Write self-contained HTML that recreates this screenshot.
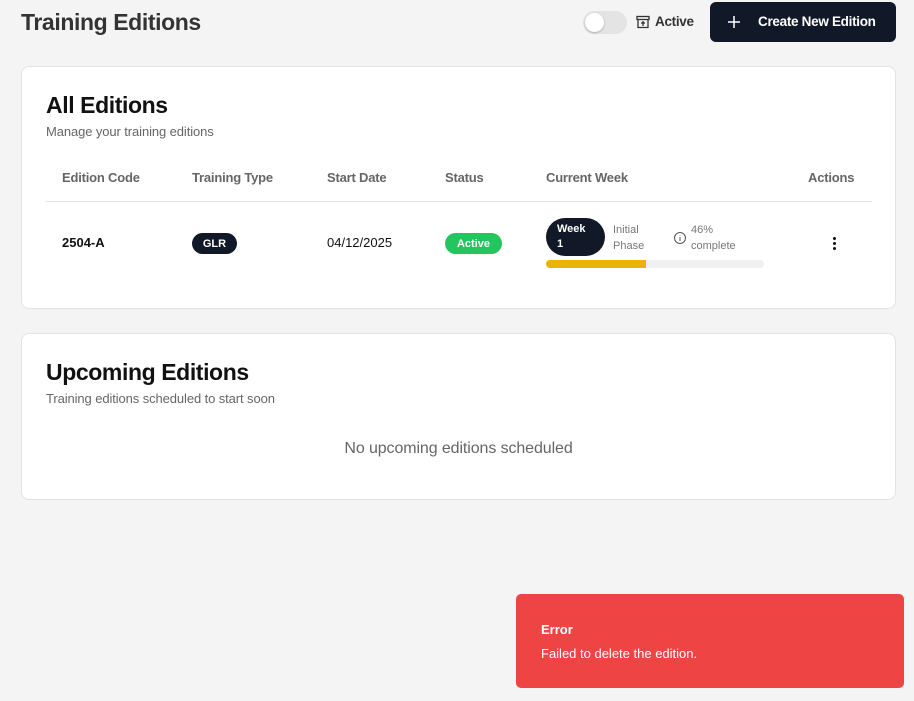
<!DOCTYPE html>
<html><head><style>
*{box-sizing:border-box;margin:0;padding:0}
body{width:914px;height:701px;background:#f4f4f4;font-family:"Liberation Sans",sans-serif;position:relative;overflow:hidden;color:#111}
.abs{position:absolute}
.card{position:absolute;left:21px;width:875px;background:#fff;border:1px solid #e3e3e3;border-radius:8px}
.th{font-size:13px;font-weight:bold;color:#666;letter-spacing:-0.2px}
</style></head><body>
<div class="abs" style="left:21px;top:9px;font-size:23px;font-weight:bold;color:#333;letter-spacing:-0.4px">Training Editions</div>
<div class="abs" style="left:583px;top:11px;width:44px;height:23px;border-radius:12px;background:#e4e4e4"><div style="position:absolute;left:2px;top:2px;width:19px;height:19px;border-radius:50%;background:#fff;box-shadow:0 1px 2px rgba(0,0,0,.25)"></div></div>
<svg class="abs" style="left:636px;top:15px" width="14" height="14" viewBox="0 0 14 14" fill="none" stroke="#333" stroke-width="1.3"><rect x="1" y="1.5" width="12" height="3"/><path d="M2 4.5v8h10v-8M7 11V7M5.3 8.5L7 6.8l1.7 1.7"/></svg>
<div class="abs" style="left:655px;top:14px;font-size:13.5px;font-weight:bold;color:#333;letter-spacing:-0.3px">Active</div>
<div class="abs" style="left:710px;top:2px;width:186px;height:40px;background:#111827;border-radius:6px;color:#fff;font-size:13.5px;font-weight:bold;line-height:40px;letter-spacing:-0.3px"><svg style="position:absolute;left:18px;top:14px" width="12" height="12" viewBox="0 0 12 12" stroke="#fff" stroke-width="1.5"><path d="M6 0v12M0 6h12"/></svg><span style="position:absolute;left:48px">Create New Edition</span></div>

<div class="card" style="top:66px;height:243px">
<div class="abs" style="left:24px;top:25px;font-size:23px;font-weight:bold;letter-spacing:-0.4px">All Editions</div>
<div class="abs" style="left:24px;top:57px;font-size:13px;color:#666;letter-spacing:-0.1px">Manage your training editions</div>
<div class="abs th" style="left:40px;top:103px">Edition Code</div>
<div class="abs th" style="left:170px;top:103px">Training Type</div>
<div class="abs th" style="left:305px;top:103px">Start Date</div>
<div class="abs th" style="left:423px;top:103px">Status</div>
<div class="abs th" style="left:524px;top:103px">Current Week</div>
<div class="abs th" style="left:786px;top:103px">Actions</div>
<div class="abs" style="left:24px;top:134px;width:826px;height:1px;background:#e5e5e5"></div>
<div class="abs" style="left:40px;top:168px;font-size:13px;font-weight:bold">2504-A</div>
<div class="abs" style="left:170px;top:166px;width:45px;height:21px;border-radius:11px;background:#111827;color:#fff;font-size:11px;font-weight:bold;text-align:center;line-height:22px">GLR</div>
<div class="abs" style="left:305px;top:168px;font-size:13px">04/12/2025</div>
<div class="abs" style="left:423px;top:166px;width:57px;height:21px;border-radius:11px;background:#22c55e;color:#fff;font-size:11px;font-weight:bold;text-align:center;line-height:22px">Active</div>
<div class="abs" style="left:524px;top:151px;width:59px;height:38px;border-radius:19px;background:#111827;color:#fff;font-size:11px;font-weight:bold;padding:4px 0 0 11px;line-height:15px">Week<br>1</div>
<div class="abs" style="left:591px;top:155px;font-size:11px;color:#777;line-height:16px">Initial<br>Phase</div>
<svg class="abs" style="left:651px;top:164px" width="14" height="14" viewBox="0 0 14 14" fill="none" stroke="#555" stroke-width="1"><circle cx="7" cy="7" r="5.5"/><path d="M7 6v4M7 4v.5"/></svg>
<div class="abs" style="left:669px;top:155px;font-size:11px;color:#777;line-height:16px">46%<br>complete</div>
<div class="abs" style="left:524px;top:193px;width:218px;height:8px;border-radius:4px;background:#f0f0f0;overflow:hidden"><div style="width:100px;height:8px;background:#eab308"></div></div>
<div class="abs" style="left:811px;top:170px;width:3px;height:3px;background:#111;border-radius:50%;box-shadow:0 5px 0 #111,0 10px 0 #111"></div>
</div>

<div class="card" style="top:333px;height:167px">
<div class="abs" style="left:24px;top:25px;font-size:23px;font-weight:bold;letter-spacing:-0.4px">Upcoming Editions</div>
<div class="abs" style="left:24px;top:57px;font-size:13px;color:#666;letter-spacing:-0.1px">Training editions scheduled to start soon</div>
<div class="abs" style="left:0;width:100%;top:106px;font-size:16px;color:#666;text-align:center;letter-spacing:-0.1px">No upcoming editions scheduled</div>
</div>

<div class="abs" style="left:516px;top:594px;width:388px;height:94px;background:#ef4444;border-radius:5px;color:#fff">
<div class="abs" style="left:25px;top:28px;font-size:13px;font-weight:bold">Error</div>
<div class="abs" style="left:25px;top:52px;font-size:13px">Failed to delete the edition.</div>
</div>
</body></html>
